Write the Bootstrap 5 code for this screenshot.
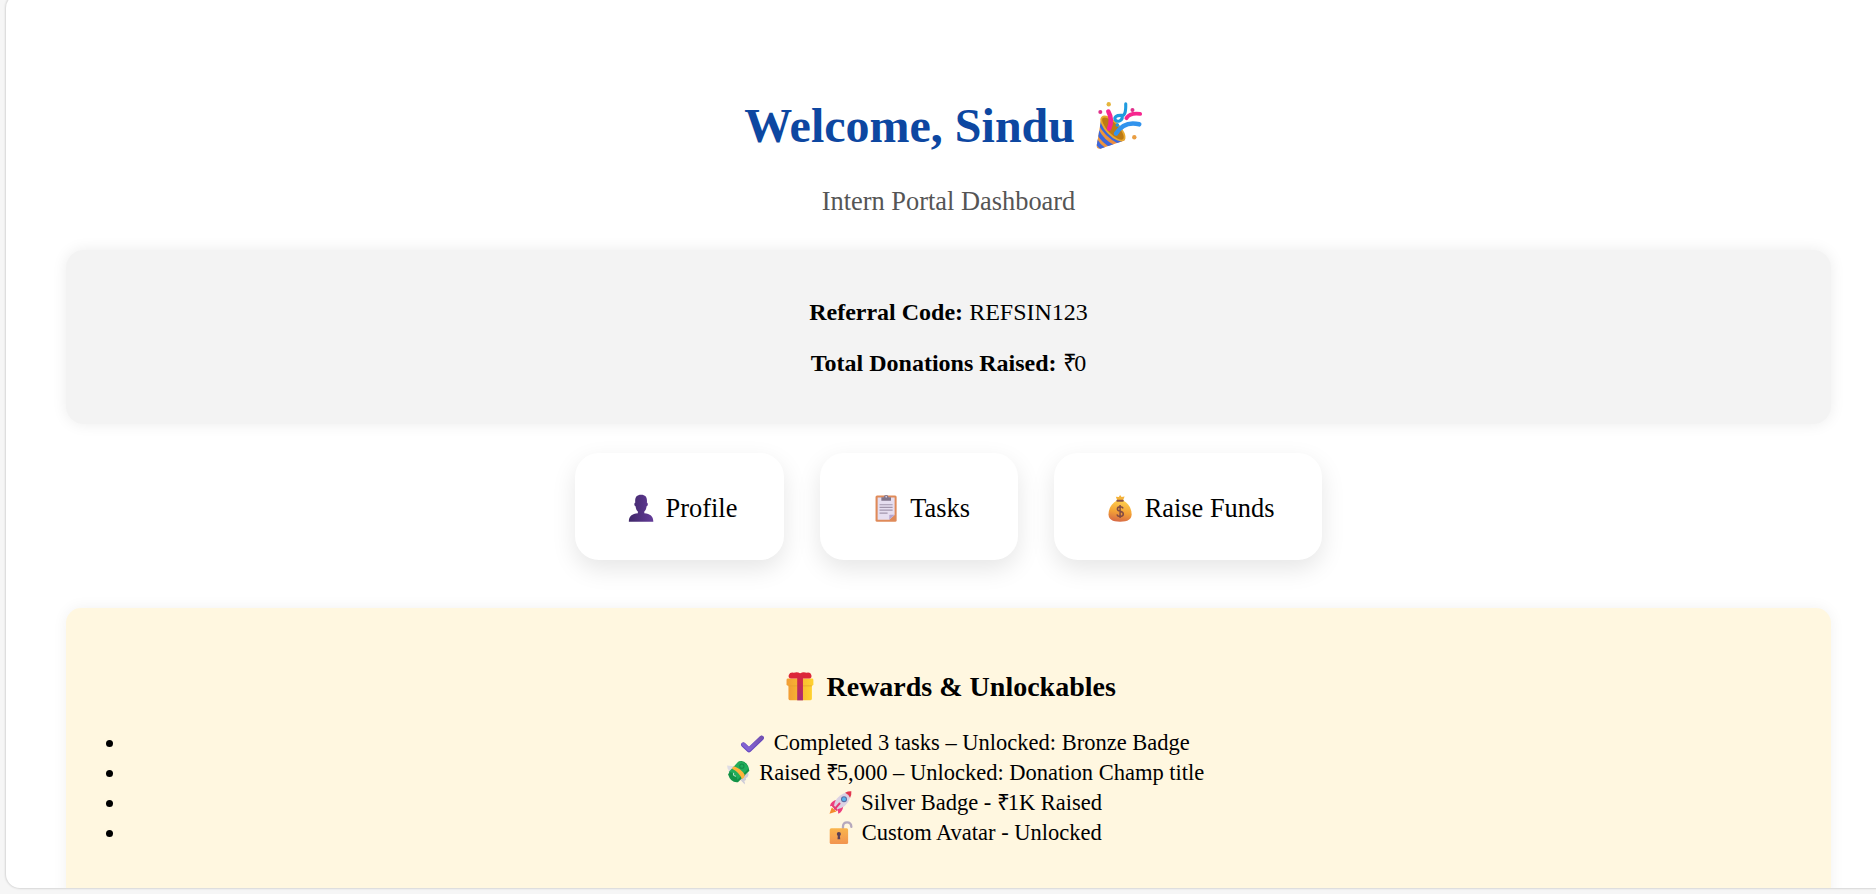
<!DOCTYPE html>
<html lang="en">
<head>
<meta charset="utf-8">
<meta name="viewport" content="width=device-width, initial-scale=1">
<title>Intern Portal Dashboard</title>
<link href="https://cdn.jsdelivr.net/npm/bootstrap@5.3.0/dist/css/bootstrap.min.css" rel="stylesheet">
<style>
  body { background: #f6f6f6; font-family: "Liberation Serif", "Times New Roman", serif; color: #000; height: 894px; }
  .frame { height: 894px; margin: -6px -14px 0 6px; padding: 99px 59px 0 60px; background: #fff; border-radius: 14px; box-shadow: 0 0 2px 1px rgba(0,0,0,.13); }
  .page-title { font-size: 48px; line-height: 66px; font-weight: 700; color: #0d47a1; }
  .subtitle { font-size: 26.4px; line-height: 36px; color: #555; }
  .info { height: 174px; margin-top: 31px; padding-top: 2px; border-radius: 18px; background: #f3f3f3; box-shadow: 0 0 15px rgba(0,0,0,.08); font-size: 24px; line-height: 27px; }
  .tiles { gap: 35.500px; margin-top: 29px; }
  .tile { height: 107px; padding: 5px 47.700px 0 48px; border-radius: 24px; background: #fff; box-shadow: 0 9px 24px rgba(0,0,0,.1); font-size: 26.4px; color: #000; text-decoration: none; }
  .tile:nth-child(1) { padding-right: 47px; }
  .tile:nth-child(2) { padding-right: 48.500px; }
  .rewards { height: 300px; margin-top: 48px; padding: 60px 30px 0; border-radius: 15px; background: #fff7e0; box-shadow: 0 0 15px rgba(0,0,0,.06); }
  .rewards h2 { font-size: 28px; line-height: 38px; font-weight: 700; }
  .rewards ul { margin-top: 22px; font-size: 22.5px; line-height: 30px; padding-left: 30px; }
  .rupee { letter-spacing: -.1em; }
  .emo { width: 1.37em; height: 1.37em; vertical-align: -.325em; margin-top: -.4em; }
</style>
</head>
<body class="overflow-hidden">
<main class="frame overflow-hidden text-center">
  <h1 class="page-title mb-0">Welcome, Sindu <svg class="emo" viewBox="1.1 0 36 36">
    <defs><linearGradient id="cone" x1="0" y1="0" x2="1" y2="0"><stop stop-color="#ef9a3d"/><stop offset="1" stop-color="#e9813e"/></linearGradient>
    <clipPath id="coneClip"><path d="M9 14.2 6.4 29.3Q6.3 31.5 8.8 31L21.6 26.6Q23 25 20 22Z"/></clipPath></defs>
    <path d="M9 14.2 6.4 29.3Q6.3 31.5 8.8 31L21.6 26.6Q23 25 20 22Z" fill="url(#cone)"/>
    <g clip-path="url(#coneClip)" fill="none" stroke="#3d67dc" stroke-width="2.2"><path d="M7.800 16q3 7.500 12 12"/><path d="M6.500 21q3 6 9 9"/><path d="M5.500 26q2 3.500 5 5.500"/></g>
    <ellipse cx="15.300" cy="20" rx="3.400" ry="8.500" transform="rotate(-44 15.300 20)" fill="#bd7a14" stroke="#e9a92f" stroke-width="1"/>
    <g fill="none" stroke-linecap="round" stroke-width="2.500"><path d="M12.800 10.700q2.500 4.300 .4 9.400" stroke="#f7268f"/><path d="M17 22.700q4.500-7 12.700-5" stroke="#3193ed"/><path d="M30.200 12q-5.500-.8-7.500 2.300" stroke="#f7268f" stroke-width="2.100"/><path d="M22.300 6.500q.2 6.800-2.200 6.300c-3-.2-4.300 1-3.500 2.500 1.200 1.500 4 .4 3.800-1.800" stroke="#209bdf" stroke-width="1.700"/></g>
    <circle cx="13" cy="6.700" r="1.200" fill="#e5b53d"/><circle cx="8.400" cy="11" r="1.100" fill="#df308c"/><circle cx="26" cy="9.900" r="1.100" fill="#df308c"/><circle cx="17.700" cy="18.100" r="1" fill="#2496df"/><circle cx="27" cy="24.800" r="1.200" fill="#e99e43"/>
  </svg></h1>
  <p class="subtitle mb-0 mt-4">Intern Portal Dashboard</p>

  <section class="info d-flex flex-column justify-content-center gap-4">
    <div><strong>Referral Code:</strong> REFSIN123</div>
    <div><strong>Total Donations Raised:</strong> <span class="rupee">₹</span>0</div>
  </section>

  <nav class="tiles d-flex justify-content-center">
    <a class="tile d-flex align-items-center" href="#"><span><svg class="emo" viewBox="0 0 36 36">
      <defs><linearGradient id="bust"><stop stop-color="#3f2768"/><stop offset="1" stop-color="#643c99"/></linearGradient></defs>
      <path d="M5.800 31.500C5.800 26 9 23.900 14.800 23.200V21.500C13.300 20.200 12.800 18.300 12.500 16.300 11 16 10.900 12.700 12.200 12.700 11.700 7.500 13.300 4.700 18 4.700S24.300 7.500 23.800 12.700C25.100 12.700 25 16 23.500 16.300 23.200 18.300 22.700 20.200 21.200 21.500V23.200C27 23.900 30.200 26 30.200 31.500Z" fill="url(#bust)"/></svg> Profile</span></a>
    <a class="tile d-flex align-items-center" href="#"><span><svg class="emo" viewBox="0 0 36 36">
      <rect x="7.500" y="5.400" width="21" height="26.200" rx="1.500" fill="#df8a59"/><path d="M9.600 7.500H26.500V24.800L21.200 29.700H9.600Z" fill="#e6def0"/><path d="M26.500 24.600 21.200 29.700V25.400Q21.200 24.600 22 24.600Z" fill="#b7a5ce"/>
      <path d="M13.300 7.200h2.500a2.300 2.300 0 0 1 4.600 0h2.500v3.500H13.300Z" fill="#81758a"/><circle cx="18.100" cy="6.800" r=".8" fill="#e6def0"/>
      <path d="M11.500 14.700h13M11.500 17.400h13M11.500 20.100h13M11.500 23h8" stroke="#a296ad" stroke-width="1.200"/></svg> Tasks</span></a>
    <a class="tile d-flex align-items-center" href="#"><span><svg class="emo" viewBox="0 0 36 36">
      <defs><linearGradient id="sack" x1=".6" y1="0" x2=".4" y2="1"><stop stop-color="#ffcf4d"/><stop offset=".55" stop-color="#f3a136"/><stop offset="1" stop-color="#d76945"/></linearGradient></defs>
      <path d="M15 10 13.800 6.600 16.700 7 18 4.900 19.500 7 22.500 6.400 21 10.200Z" fill="#f4b33a"/><path d="M14.800 10.500C9 14 6.500 19 6.500 24.100c0 5 3.500 7.400 11.500 7.400s11.500-2.400 11.500-7.400c0-5.100-2.500-10.100-8.300-13.600Z" fill="url(#sack)"/><rect x="14.300" y="9.700" width="7.400" height="1.900" rx=".9" fill="#895047"/>
      <path d="M21.100 18.300q-.8-1.700-3-1.700-2.800 0-2.800 2.300 0 1.700 2.800 2.300 3.100.7 3.100 2.800 0 2.400-3.100 2.400-2.600 0-3.300-2M18 15v13" fill="none" stroke="#824b43" stroke-width="1.500"/></svg> Raise Funds</span></a>
  </nav>

  <section class="rewards">
    <h2 class="mb-0"><svg class="emo" viewBox="0 0 36 36">
      <defs><linearGradient id="box"><stop stop-color="#f29d35"/><stop offset="1" stop-color="#ffd22f"/></linearGradient><linearGradient id="ribbon" x1="0" y1="0" x2="0" y2="1"><stop stop-color="#dd2638"/><stop offset="1" stop-color="#a62b78"/></linearGradient></defs>
      <path d="M7 16H29V29.500Q29 31.300 27.300 31.300H8.700Q7 31.300 7 29.500Z" fill="url(#box)"/><rect x="5.200" y="10.900" width="25.200" height="6.600" rx="1.300" fill="url(#box)"/><path d="M7 17.700h22" stroke="#e6a02d" stroke-width=".7"/><path d="M17.500 10.800H9.500Q6.500 10.500 7.300 7.500 8.500 4.500 12 5.400 15.500 4 18 6.200 20.500 4 24 5.400 27.500 4.500 28.500 7.500 29.200 10.500 26.500 10.800Z" fill="#dc2638"/><path d="M15.200 6h5.400V31.300H15.200Z" fill="url(#ribbon)"/></svg> Rewards &amp; Unlockables</h2>
    <ul class="mb-0">
      <li><svg class="emo" viewBox="0 0 36 36"><defs><linearGradient id="tick" x1="0" y1="1" x2="1" y2="0"><stop stop-color="#8566d9"/><stop offset="1" stop-color="#7452b0"/></linearGradient></defs><path d="M7.500 20.700 14 26.800 28.700 12.800" fill="none" stroke="#6446be" stroke-width="5.500" stroke-linejoin="round" stroke-linecap="round"/><path d="M7.500 20.200 14 26.200 28.700 12.300" fill="none" stroke="url(#tick)" stroke-width="4" stroke-linejoin="round" stroke-linecap="round"/></svg> Completed 3 tasks – Unlocked: Bronze Badge</li>
      <li><svg class="emo" viewBox="0 0 36 36"><path d="M4.800 10 17 11.500 9 21Q8.500 17.500 6.500 17.300 7.500 14.500 5.500 14Z" fill="#dedce5"/><path d="M29.500 18 19 25.500 25.500 32Q26 29 24.700 28 28 27 26.500 24.500 30.500 23.500 29.500 18Z" fill="#cfcdd8"/><path d="M18 5.500Q24.500 2.500 29.300 10.500L30.800 16 17.500 29.500Q9 30.500 6 20.500L7.400 17.500Z" fill="#129347"/><path d="M18 5.500Q26.500 4.500 30 13.500L17 26.700Q14.500 19 7 17.300Z" fill="#22ad5b"/><path d="M12.800 10.800Q21 13.500 25.200 20.500L25 23.500 22.300 26Q19 18 10.300 13.500Z" fill="#ffb43b"/><circle cx="22" cy="10.700" r="2.500" fill="none" stroke="#168c49" stroke-width="1.200"/><path d="M12.500 18.500q-1.200 3.500 2.700 4" fill="none" stroke="#b5e1c6" stroke-width="1.300"/></svg> Raised <span class="rupee">₹</span>5,000 – Unlocked: Donation Champ title</li>
      <li><svg class="emo" viewBox="0 0 36 36"><path d="M8 24 5.200 31.300 13.500 28.500Z" fill="#f58a2c"/><path d="M14.500 14.800Q6.500 16 5.800 22.500L12 21.500ZM21.500 22Q20.500 29.500 15.500 31.300L14.700 25Z" fill="#ed3d7e"/><path d="M10.500 24.500Q10 12 24.500 6.300L29.800 11.700Q25.500 24.500 12.500 26.700Z" fill="#dbd1e3"/><path d="M23.500 6.700Q27 4.800 30.800 5 31.200 9 29.300 12.700 27.500 8.500 23.500 6.700Z" fill="#e23850"/><circle cx="22.200" cy="14.200" r="3.500" fill="#596ca2"/><circle cx="22.200" cy="14.200" r="2.300" fill="#55b5ed"/><path d="M9.300 22.200 13.700 26.800M11.500 25.500 17 19.300" stroke="#e43b76" stroke-width="2.300" stroke-linecap="round"/></svg> Silver Badge - <span class="rupee">₹</span>1K Raised</li>
      <li><svg class="emo" viewBox="0 0 36 36"><defs><linearGradient id="lock" x1="0" y1="0" x2="0" y2="1"><stop stop-color="#f9b54c"/><stop offset="1" stop-color="#f29450"/></linearGradient></defs><path d="M21 13V11.500Q21 6.300 25.800 6.300 30.500 6.300 30.800 11.500" fill="none" stroke="#b6a9bd" stroke-width="2.700" stroke-linecap="round"/><rect x="5.500" y="13" width="21.500" height="18.500" rx="1.800" fill="url(#lock)"/><circle cx="16.200" cy="20" r="2.400" fill="#593f55"/><path d="M15.100 21h2.200L17.800 26H14.600Z" fill="#593f55"/></svg> Custom Avatar - Unlocked</li>
    </ul>
  </section>
</main>
<script src="https://cdn.jsdelivr.net/npm/bootstrap@5.3.0/dist/js/bootstrap.bundle.min.js"></script>
</body>
</html>
